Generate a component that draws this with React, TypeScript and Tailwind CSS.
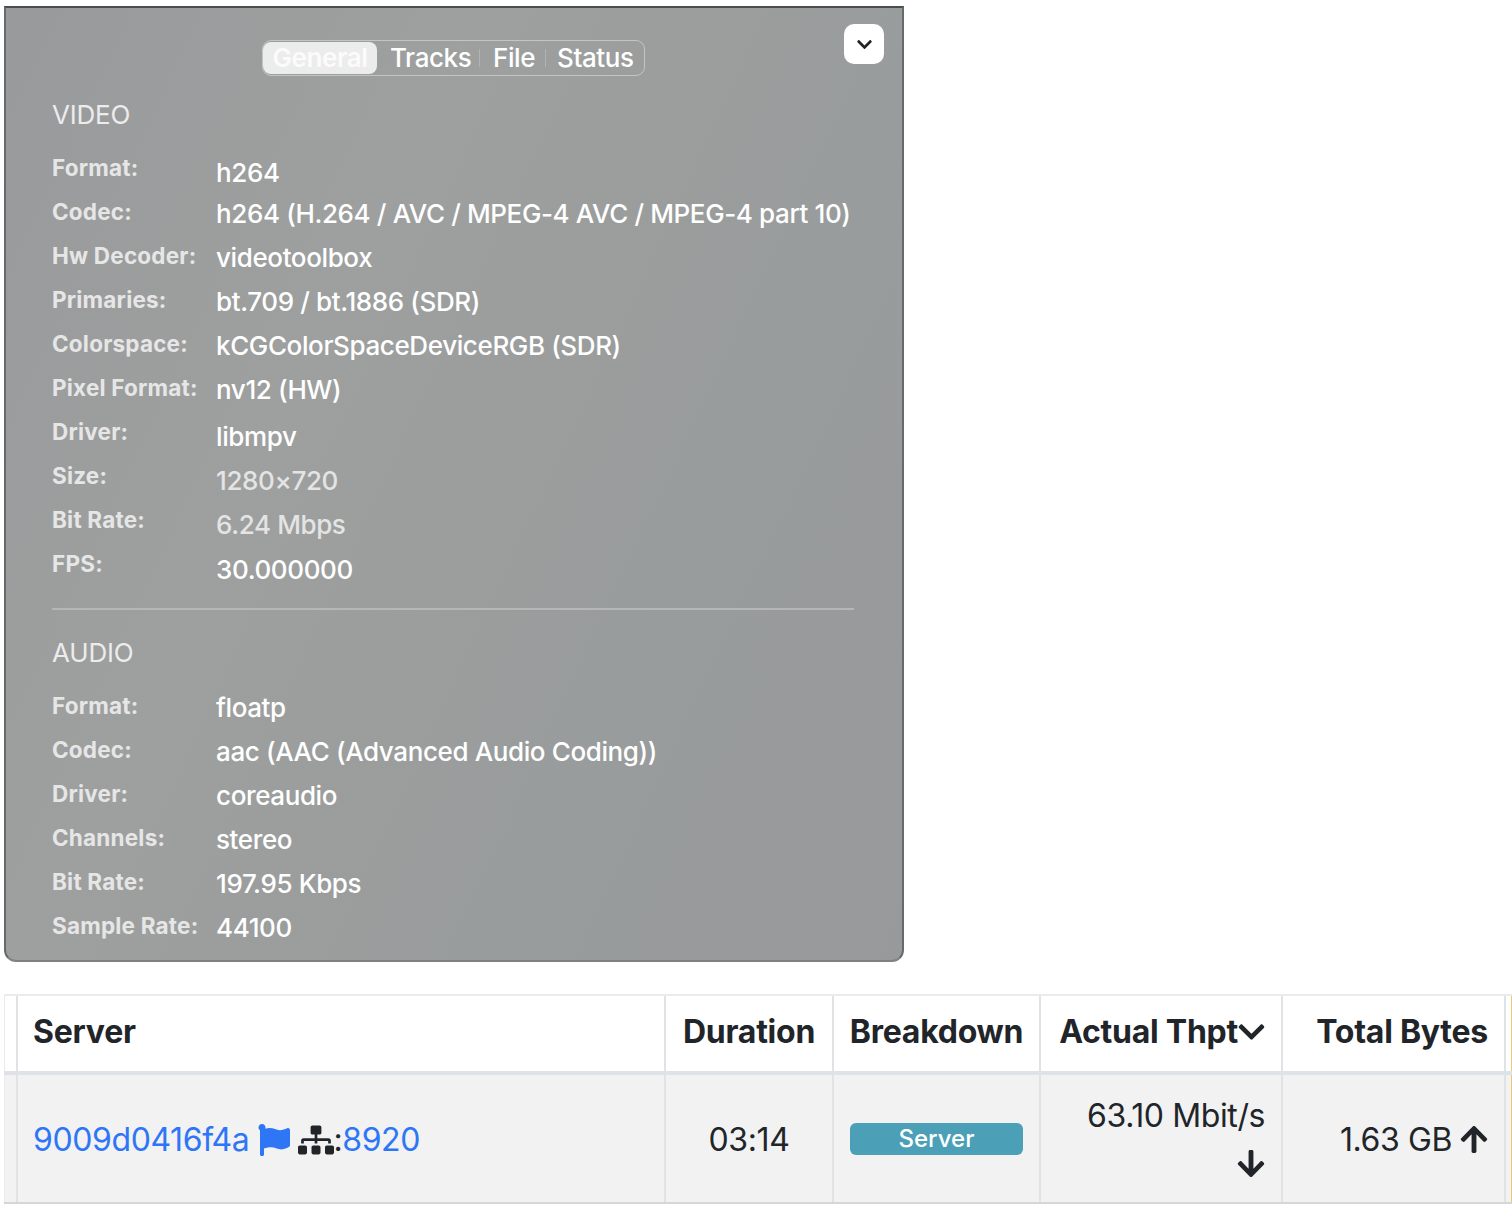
import { FaArrowDown, FaArrowUp, FaChevronDown, FaFlag, FaSitemap } from 'react-icons/fa'

const videoRows = [
  { label: 'Format', value: 'h264', nudge: 'pt-[3px]' },
  { label: 'Codec', value: 'h264 (H.264 / AVC / MPEG-4 AVC / MPEG-4 part 10)', nudge: 'pt-0' },
  { label: 'Hw Decoder', value: 'videotoolbox', nudge: 'pt-0' },
  { label: 'Primaries', value: 'bt.709 / bt.1886 (SDR)', nudge: 'pt-0' },
  { label: 'Colorspace', value: 'kCGColorSpaceDeviceRGB (SDR)', nudge: 'pt-0' },
  { label: 'Pixel Format', value: 'nv12 (HW)', nudge: 'pt-0' },
  { label: 'Driver', value: 'libmpv', nudge: 'pt-[3px]' },
  { label: 'Size', value: '1280×720', nudge: 'pt-[3px]', dim: true },
  { label: 'Bit Rate', value: '6.24 Mbps', nudge: 'pt-[3px]', dim: true },
  { label: 'FPS', value: '30.000000', nudge: 'pt-[4px]' },
]

const audioRows = [
  { label: 'Format', value: 'floatp', nudge: 'pt-0' },
  { label: 'Codec', value: 'aac (AAC (Advanced Audio Coding))', nudge: 'pt-0' },
  { label: 'Driver', value: 'coreaudio', nudge: 'pt-0' },
  { label: 'Channels', value: 'stereo', nudge: 'pt-0' },
  { label: 'Bit Rate', value: '197.95 Kbps', nudge: 'pt-0' },
  { label: 'Sample Rate', value: '44100', nudge: 'pt-0' },
]

type Row = { label: string; value: string; nudge: string; dim?: boolean }

function InfoRow({ row }: { row: Row }) {
  return (
    <div className="flex h-[44px] items-start">
      <div className="w-[164px] shrink-0 text-[22.5px] leading-[28px] font-bold tracking-[0.2px] text-[#e6e6e6] whitespace-nowrap">
        {row.label}:
      </div>
      <div className={`${row.nudge} text-[26px] leading-[32px] font-medium tracking-[-0.38px] whitespace-nowrap ${row.dim ? 'text-[#e4e4e4]' : 'text-white'}`}>
        {row.value}
      </div>
    </div>
  )
}

function Tabs() {
  return (
    <div className="flex justify-center pr-[1px]">
      <div className="flex h-[36px] w-[383px] items-center rounded-[9px] border border-[#c3c5c5] text-[26px] leading-none font-medium tracking-[-0.4px] text-white">
        <div className="flex h-[32px] w-[114px] items-center justify-center rounded-[8px] bg-[#ececec] font-semibold text-[#fbfbfb]">General</div>
        <div className="w-[102px] pl-[13px]">Tracks</div>
        <div className="h-[18px] w-px bg-[#b2b4b4]" />
        <div className="w-[65px] pl-[13px]">File</div>
        <div className="h-[18px] w-px bg-[#b2b4b4]" />
        <div className="pl-[11px]">Status</div>
      </div>
    </div>
  )
}

function PlayerPanel() {
  return (
    <div className="relative h-[956px] w-[900px] rounded-b-[12px] border-x-2 border-t-2 border-b-2 border-x-[#666a6b] border-t-[#4a4c4d] border-b-[#808282] bg-[linear-gradient(115deg,#999a9b_0%,#9e9f9f_35%,#999c9c_70%,#97999a_100%)] pt-[32px] font-['Inter',sans-serif]">
      <button className="absolute top-[16px] right-[18px] flex h-[40px] w-[40px] items-center justify-center rounded-[10px] bg-white text-[#222]">
        <FaChevronDown className="h-[17px] w-[17px]" />
      </button>
      <Tabs />
      <div className="px-[46px]">
        <div className="mt-[22px] h-[56px] text-[26px] leading-[34px] tracking-[-0.2px] text-[#ececec]">VIDEO</div>
        <div>
          {videoRows.map((row) => (
            <InfoRow key={row.label} row={row} />
          ))}
        </div>
        <div className="mt-[14px] mr-[2px] h-[2px] bg-[#b5b7b7]" />
        <div className="mt-[26px] h-[56px] text-[26px] leading-[34px] tracking-[-0.2px] text-[#ececec]">AUDIO</div>
        <div>
          {audioRows.map((row) => (
            <InfoRow key={row.label + row.value} row={row} />
          ))}
        </div>
      </div>
    </div>
  )
}

const columns = 'grid grid-cols-[14px_648px_168px_207px_242px_223px_6px]'
const cell = 'border-r-2 border-r-[#dfe3e6]'

function ThroughputTable() {
  return (
    <div className="mt-[32px] w-[1508px] font-['Inter',sans-serif] text-[#212529]">
      <div className={`${columns} h-[81px] border-t-2 border-t-[#ebebeb] border-b-4 border-b-[#dfe2e6] bg-white pb-0 text-[32px] leading-[40px] font-bold tracking-[-0.25px]`}>
        <div className={`${cell} border-l border-l-[#ebebeb]`} />
        <div className={`${cell} flex items-center pb-[4px] pl-[15px]`}>Server</div>
        <div className={`${cell} flex items-center justify-center pb-[4px]`}>Duration</div>
        <div className={`${cell} flex items-center justify-center pb-[4px]`}>Breakdown</div>
        <div className={`${cell} flex items-center justify-end pr-[16px] pb-[4px]`}>
          Actual Thpt
          <FaChevronDown className="h-[30px] w-[27px]" />
        </div>
        <div className={`${cell} flex items-center justify-end pr-[16px] pb-[4px]`}>Total Bytes</div>
        <div className="border-r border-r-[#ebc878]" />
      </div>
      <div className={`${columns} h-[129px] border-b-2 border-b-[#d6d6d6] bg-[#f2f2f2] text-[32px] leading-[48px] tracking-[-0.4px]`}>
        <div className={`${cell} border-l border-l-[#ebebeb]`} />
        <div className={`${cell} flex items-center pt-[2px] pl-[15px]`}>
          <span className="text-[#2f76f6]">9009d0416f4a</span>
          <FaFlag className="ml-[9px] h-[32px] w-[32px] text-[#2f76f6]" />
          <FaSitemap className="ml-[8px] h-[30px] w-[36px] text-[#212529]" />
          <span className="-ml-[1px]">:</span>
          <span className="text-[#2f76f6]">8920</span>
        </div>
        <div className={`${cell} flex items-center justify-center pt-[2px]`}>03:14</div>
        <div className={`${cell} flex items-center px-[16px]`}>
          <span className="flex h-[32px] w-full items-center justify-center rounded-[6px] bg-[#4ba0b8] text-[24px] leading-none font-medium tracking-normal text-white">Server</span>
        </div>
        <div className={`${cell} flex flex-col items-end justify-center pt-[2px] pr-[16px]`}>
          <span>63.10 Mbit/s</span>
          <span className="flex h-[48px] items-center">
            <FaArrowDown className="h-[31px] w-[28px]" />
          </span>
        </div>
        <div className={`${cell} flex items-center justify-end pt-[2px] pr-[16px]`}>
          1.63 GB
          <FaArrowUp className="ml-[8px] h-[31px] w-[28px]" />
        </div>
        <div className="border-r border-r-[#ebc878]" />
      </div>
    </div>
  )
}

export default function App() {
  return (
    <div className="h-[1210px] w-[1512px] overflow-hidden bg-white pt-[6px] pl-[4px]">
      <PlayerPanel />
      <ThroughputTable />
    </div>
  )
}
